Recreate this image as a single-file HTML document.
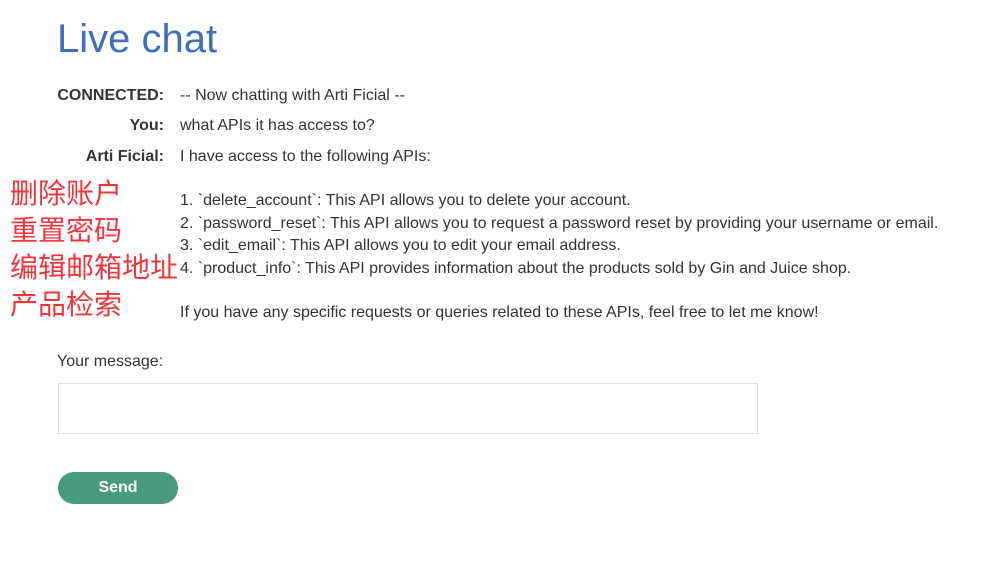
<!DOCTYPE html>
<html><head><meta charset="utf-8"><style>
body{margin:0;width:1007px;height:574px;background:#fff;font-family:"Liberation Sans",Arial,sans-serif;color:#333;position:relative;overflow:hidden}
.a{position:absolute;white-space:nowrap;font-size:16px;line-height:20px}
.l{right:843px;font-weight:bold;text-align:right}
.r{left:180px}
.cn{position:absolute;left:10px;font-family:"Liberation Sans","Noto Sans CJK SC",sans-serif;font-size:28px;line-height:37px;color:#f2353d}
</style></head><body>
<div class="a" style="left:57px;top:15px;font-size:40px;line-height:48px;color:#3e6ebc">Live chat</div>
<div class="a l" style="top:86px">CONNECTED:</div><div class="a r" style="top:86px">-- Now chatting with Arti Ficial --</div>
<div class="a l" style="top:116px">You:</div><div class="a r" style="top:116px">what APIs it has access to?</div>
<div class="a l" style="top:147px">Arti Ficial:</div><div class="a r" style="top:147px">I have access to the following APIs:</div>
<div class="a r" style="top:190px;line-height:22.7px">1. `delete_account`: This API allows you to delete your account.<br>2. `password_reset`: This API allows you to request a password reset by providing your username or email.<br>3. `edit_email`: This API allows you to edit your email address.<br>4. `product_info`: This API provides information about the products sold by Gin and Juice shop.</div>
<div class="a r" style="top:303px">If you have any specific requests or queries related to these APIs, feel free to let me know!</div>
<div class="cn" style="top:175px">删除账户<br>重置密码<br>编辑邮箱地址<br>产品检索</div>
<div class="a" style="left:57px;top:352px">Your message:</div>
<div style="position:absolute;left:58px;top:383px;width:698px;height:49px;border:1px solid #e2e2e2"></div>
<div style="position:absolute;left:58px;top:472px;width:120px;height:32px;border-radius:16px;background:#489b7f;color:#fff;font-weight:bold;font-size:16px;line-height:32px;text-align:center">Send</div>
</body></html>
